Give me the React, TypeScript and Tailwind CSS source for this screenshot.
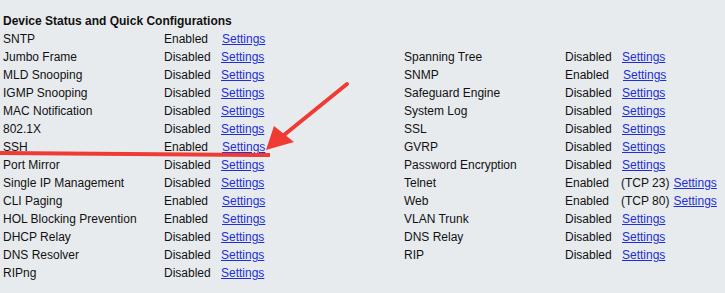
import React from 'react';

type Item = { name: string; enabled: boolean; extra?: string };

const left: Item[] = [
  { name: 'SNTP', enabled: true },
  { name: 'Jumbo Frame', enabled: false },
  { name: 'MLD Snooping', enabled: false },
  { name: 'IGMP Snooping', enabled: false },
  { name: 'MAC Notification', enabled: false },
  { name: '802.1X', enabled: false },
  { name: 'SSH', enabled: true },
  { name: 'Port Mirror', enabled: false },
  { name: 'Single IP Management', enabled: false },
  { name: 'CLI Paging', enabled: true },
  { name: 'HOL Blocking Prevention', enabled: true },
  { name: 'DHCP Relay', enabled: false },
  { name: 'DNS Resolver', enabled: false },
  { name: 'RIPng', enabled: false },
];

// right column starts on the second row (next to Jumbo Frame)
const right: (Item | null)[] = [
  null,
  { name: 'Spanning Tree', enabled: false },
  { name: 'SNMP', enabled: true },
  { name: 'Safeguard Engine', enabled: false },
  { name: 'System Log', enabled: false },
  { name: 'SSL', enabled: false },
  { name: 'GVRP', enabled: false },
  { name: 'Password Encryption', enabled: false },
  { name: 'Telnet', enabled: true, extra: '(TCP 23)' },
  { name: 'Web', enabled: true, extra: '(TCP 80)' },
  { name: 'VLAN Trunk', enabled: false },
  { name: 'DNS Relay', enabled: false },
  { name: 'RIP', enabled: false },
  null,
];

const Status: React.FC<{ item: Item }> = ({ item }) => {
  if (item.extra) {
    return (
      <span className="whitespace-nowrap">
        <span className="inline-block w-[56px]">Enabled</span>
        <span className="mr-[4px]">{item.extra}</span>
        <a href="#" className="text-[#1c2fd6] underline">Settings</a>
      </span>
    );
  }
  return (
    <span className="whitespace-nowrap">
      <span className={item.enabled ? 'inline-block w-[58px]' : 'inline-block w-[57px]'}>
        {item.enabled ? 'Enabled' : 'Disabled'}
      </span>
      <a href="#" className="text-[#1c2fd6] underline">Settings</a>
    </span>
  );
};

const App = () => {
  return (
    <div
      className="relative w-[725px] h-[293px] overflow-hidden bg-[#e8ebee] text-[12px] leading-[18px] text-[#111]"
      style={{ fontFamily: '"Liberation Sans", Arial, sans-serif' }}
    >
      <div className="pt-[12px] pl-[3px]">
        <div className="font-bold">Device Status and Quick Configurations</div>
        <div className="grid grid-cols-[161px_240px_161px_1fr]">
          {left.map((l, i) => {
            const r = right[i];
            return (
              <React.Fragment key={l.name}>
                <div>{l.name}</div>
                <div>
                  <Status item={l} />
                </div>
                <div>{r ? r.name : ''}</div>
                <div>{r ? <Status item={r} /> : ''}</div>
              </React.Fragment>
            );
          })}
        </div>
      </div>

      {/* red annotation arrow + underline */}
      <svg className="absolute left-0 top-0 pointer-events-none" width="725" height="293">
        <line x1="0" y1="153" x2="270" y2="155" stroke="#ef3b33" strokeWidth="4" />
        <line x1="347" y1="84" x2="284" y2="135" stroke="#ef3b33" strokeWidth="4" strokeLinecap="round" />
        <polygon points="266,150 274,126 294,142" fill="#ef3b33" />
      </svg>
    </div>
  );
};

export default App;
